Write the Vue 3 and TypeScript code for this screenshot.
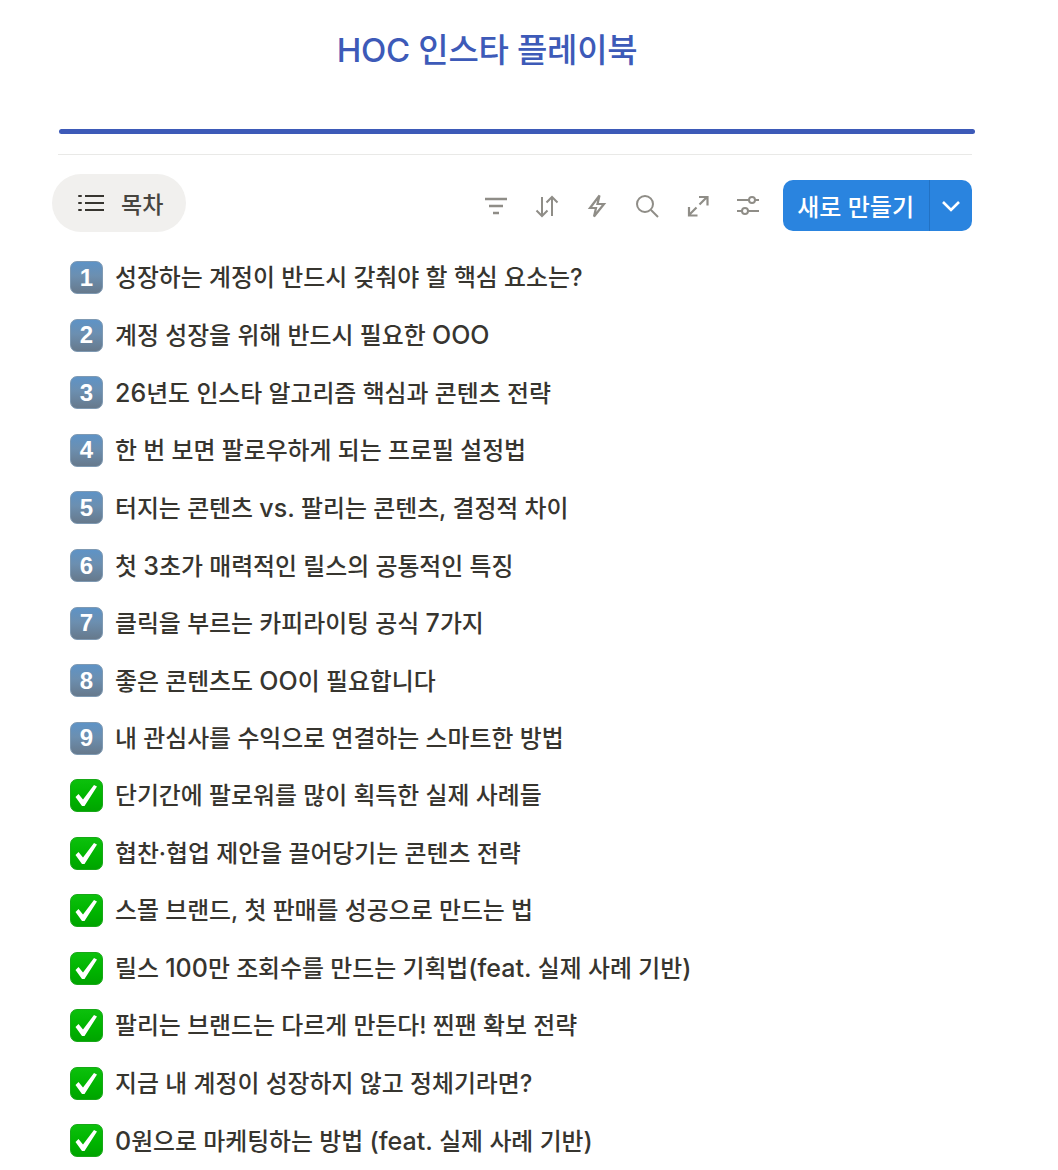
<script setup lang="ts">
interface Seg { t: string; lat: boolean }
interface Row { mark: string; segs: Seg[]; key: string }
const texts: string[] = [
  '성장하는 계정이 반드시 갖춰야 할 핵심 요소는?',
  '계정 성장을 위해 반드시 필요한 OOO',
  '26년도 인스타 알고리즘 핵심과 콘텐츠 전략',
  '한 번 보면 팔로우하게 되는 프로필 설정법',
  '터지는 콘텐츠 vs. 팔리는 콘텐츠, 결정적 차이',
  '첫 3초가 매력적인 릴스의 공통적인 특징',
  '클릭을 부르는 카피라이팅 공식 7가지',
  '좋은 콘텐츠도 OO이 필요합니다',
  '내 관심사를 수익으로 연결하는 스마트한 방법',
  '단기간에 팔로워를 많이 획득한 실제 사례들',
  '협찬·협업 제안을 끌어당기는 콘텐츠 전략',
  '스몰 브랜드, 첫 판매를 성공으로 만드는 법',
  '릴스 100만 조회수를 만드는 기획법(feat. 실제 사례 기반)',
  '팔리는 브랜드는 다르게 만든다! 찐팬 확보 전략',
  '지금 내 계정이 성장하지 않고 정체기라면?',
  '0원으로 마케팅하는 방법 (feat. 실제 사례 기반)',
]
function split(text: string): Seg[] {
  const parts = text.match(/[A-Za-z0-9.()]+|[^A-Za-z0-9.()]+/g) ?? []
  return parts.map((t) => ({ t, lat: /^[A-Za-z0-9.()]/.test(t) }))
}
const rows: Row[] = texts.map((text, i) => ({ mark: i < 9 ? String(i + 1) : '', segs: split(text), key: text }))
</script>

<template>
  <div class="page">
    <h1 class="title">HOC 인스타 플레이북</h1>
    <div class="accent"></div>
    <div class="rule"></div>
    <div class="toolbar">
      <div class="toc">
        <svg width="26" height="20" viewBox="0 0 26 20" fill="none" stroke="#37352f" stroke-width="2">
          <path d="M7 3h19M7 10h19M7 17h19" />
          <path d="M1 3h2M1 10h2M1 17h2" stroke-linecap="round" />
        </svg>
        <span>목차</span>
      </div>
      <div class="actions">
        <svg class="ic" viewBox="0 0 24 24"><path d="M1 5h22M5 12h14M9 19h6" stroke-width="2.4" /></svg>
        <svg class="ic" viewBox="0 0 24 24"><path d="M7 3v19M1.500 16.500 7 22l5.500-5.500M17 22V3M11.500 8.500 17 3l5.500 5.500" /></svg>
        <svg class="ic" viewBox="0 0 24 24"><path d="M14.500 1.500 5 14h6l-2 8.500 10-12.500h-6.500z" stroke-width="2.200" /></svg>
        <svg class="ic" viewBox="0 0 24 24"><circle cx="10" cy="10" r="8" /><path d="m16 16 7 7" /></svg>
        <svg class="ic" viewBox="0 0 24 24"><path d="M3 21l7.500-7.500M13.500 10.500 21 3M13 3h8.500v8.500M3 13v8.500h8.500" stroke-width="2.200" /></svg>
        <svg class="ic" viewBox="0 0 24 24"><path d="M1 6h12M19 6h4M1 17h5M12 17h11" /><circle cx="16" cy="6" r="3" /><circle cx="9" cy="17" r="3" /></svg>
      </div>
      <div class="new-btn">
        <span class="new-label">새로 만들기</span>
        <span class="new-arrow">
          <svg width="20" height="12" viewBox="0 0 20 12" fill="none" stroke="#fff" stroke-width="2.600"><path d="m2 2 8 8 8-8" /></svg>
        </span>
      </div>
    </div>
    <div class="list">
      <div v-for="row in rows" :key="row.key" class="row">
        <span v-if="row.mark" class="key">{{ row.mark }}</span>
        <span v-else class="check">
          <svg width="33" height="33" viewBox="0 0 33 33"><path d="M5.500 18 8.500 15 13 20.500 24 6 27 7.500 14.500 27 12 27z" fill="#fff" /></svg>
        </span>
        <span class="text"><span v-for="(s, i) in row.segs" :key="i" :class="{ lat: s.lat }">{{ s.t }}</span></span>
      </div>
    </div>
  </div>
</template>

<style>
html, body { background: #fff; overflow: hidden; }
</style>

<style scoped>
.page {
  width: 1058px;
  height: 1170px;
  overflow: hidden;
  box-sizing: border-box;
  padding: 0 86px 0 58px;
  font-family: Inter, "Noto Sans CJK KR", sans-serif;
  color: #37352f;
}
.title {
  margin: 0;
  padding-top: 28px;
  height: 101px;
  box-sizing: border-box;
  text-align: center;
  font-size: 33px;
  line-height: 44px;
  font-weight: 500;
  color: #3d5ab8;
  letter-spacing: -0.3px;
  padding-right: 56px;
}
.accent {
  height: 5px;
  margin-top: 28px;
  margin-right: -3px;
  margin-left: 1px;
  border-radius: 3px;
  background: #3d5ab8;
}
.rule { height: 1px; margin-top: 20px; background: #e9e9e7; }
.toolbar {
  display: flex;
  align-items: center;
  height: 58px;
  margin-top: 19px;
}
.toc {
  display: flex;
  align-items: center;
  gap: 17px;
  height: 58px;
  box-sizing: border-box;
  margin-left: -6px;
  padding: 0 23px 0 26px;
  border-radius: 29px;
  background: #f1f0ee;
  font-size: 23px;
  font-weight: 500;
  color: #47453f;
}
.actions {
  display: flex;
  align-items: center;
  gap: 26.400px;
  margin-left: auto;
  margin-right: 23px;
  margin-top: 5px;
}
.ic {
  width: 24px;
  height: 24px;
  fill: none;
  stroke: #8f8d87;
  stroke-width: 2;
}
.new-btn {
  display: flex;
  height: 51px;
  border-radius: 10px;
  background: #2a84df;
  color: #fff;
  overflow: hidden;
  margin-top: 5px;
}
.new-label {
  display: flex;
  align-items: center;
  padding: 0 15px 0 14px;
  font-size: 24px;
  font-weight: 500;
  border-right: 1px solid #2272c4;
}
.new-arrow {
  display: flex;
  align-items: center;
  justify-content: center;
  width: 42px;
}
.list {
  display: flex;
  flex-direction: column;
  margin-top: 17px;
}
.row {
  display: flex;
  align-items: center;
  gap: 12px;
  height: 57.55px;
  padding-left: 12px;
  flex: none;
}
.key, .check {
  position: relative;
  flex: none;
  width: 33px;
  height: 33px;
  box-sizing: border-box;
  border-radius: 7px;
  display: flex;
  align-items: center;
  justify-content: center;
}
.key {
  background: linear-gradient(180deg, #5e93c6 0%, #6c8fb0 45%, #66798c 100%);
  border: 1px solid #7f9ab3;
  color: #fff;
  font-family: "Liberation Sans", sans-serif;
  font-size: 24px;
  font-weight: 700;
}
.check {
  background: linear-gradient(180deg, #0cc00c 0%, #00b400 55%, #00a400 100%);
  border: 1px solid #18a818;
}
.check svg { position: absolute; left: -1px; top: -1px; }
.text {
  font-size: 23.850px;
  font-weight: 500;
  line-height: 34px;
  white-space: nowrap;
  color: #37352f;
  padding-top: 1px;
}
.lat { font-size: 25px; }
</style>
